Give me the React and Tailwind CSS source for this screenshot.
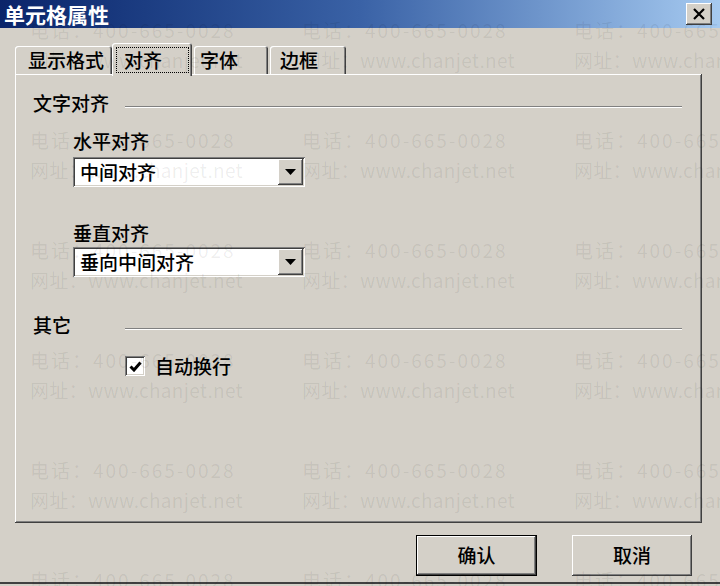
import React from "react";

const raised =
  "shadow-[inset_-1px_-1px_#404040,inset_1px_1px_#ffffff,inset_-2px_-2px_#808080,inset_2px_2px_#d4d0c8]";
const sunken =
  "shadow-[inset_1px_1px_#808080,inset_-1px_-1px_#ffffff,inset_2px_2px_#404040,inset_-2px_-2px_#d4d0c8]";

const Tab = ({ label, active, className }) => (
  <div
    className={`flex items-center rounded-t-[3px] bg-[#d4d0c8] shadow-[inset_1px_1px_#ffffff,inset_-1px_0_#404040,inset_-2px_0_#808080] ${className} ${
      active ? "relative z-10 -mb-[2px] h-[33px]" : "h-[28px]"
    }`}
  >
    {active ? (
      <span className="ml-[4px] mr-[3px] flex-1 border border-dotted border-black pl-[7px] leading-[24px]">
        {label}
      </span>
    ) : (
      <span className="leading-[24px]">{label}</span>
    )}
  </div>
);

const Heading = ({ children }) => (
  <div className="flex items-center h-[22px]">
    <span className="w-[92px] leading-[22px]">{children}</span>
    <div className="mt-[8px] h-[2px] flex-1 border-t border-[#808080] border-b border-b-white" />
  </div>
);

const Select = ({ value }) => (
  <div className={`flex h-[30px] w-[232px] items-center bg-white ${sunken}`}>
    <span className="flex-1 pl-[7px] leading-[22px]">{value}</span>
    <div
      className={`mr-[2px] flex h-[26px] w-[25px] items-center justify-center bg-[#d4d0c8] ${raised}`}
    >
      <svg width="11" height="6" viewBox="0 0 11 6">
        <path d="M0 0H11L5.5 6Z" fill="#000" />
      </svg>
    </div>
  </div>
);

export default function App() {
  const rows = [0, 1, 2, 3, 4, 5];
  const cols = [0, 1, 2];

  return (
    <div
      className="relative h-[586px] w-[720px] overflow-hidden bg-[#d4d0c8] text-[19px] font-medium text-black"
      style={{ fontFamily: '"Noto Sans CJK SC", "Noto Sans", sans-serif' }}
    >
      {/* title bar */}
      <div className="flex h-[28px] items-center justify-between bg-linear-to-r from-[#0a246a] via-[#3a62a6] to-[#a6caf0] pl-[4px] pr-[8px]">
        <span className="text-[21px] font-bold leading-none text-white">单元格属性</span>
        <div className={`flex h-[22px] w-[26px] items-center justify-center bg-[#d4d0c8] ${raised}`}>
          <svg width="14" height="12" viewBox="0 0 14 12">
            <path d="M2 1L12 11M12 1L2 11" stroke="#000" strokeWidth="2.2" />
          </svg>
        </div>
      </div>

      <div className="flex h-[556px] flex-col border-b-2 border-[#404040] px-[15px] pt-[15px]">
        {/* tabs */}
        <div className="flex h-[31px] items-end">
          <Tab label="显示格式" className="w-[97px] pl-[13px]" />
          <Tab label="对齐" active className="w-[80px]" />
          <Tab label="字体" className="ml-[2px] w-[74px] pl-[6px]" />
          <Tab label="边框" className="ml-[2px] w-[76px] pl-[10px]" />
        </div>

        {/* panel */}
        <div className={`h-[449px] w-[687px] bg-[#d4d0c8] pl-[18px] pr-[20px] pt-[18px] ${raised}`}>
          <Heading>文字对齐</Heading>

          <div className="ml-[40px]">
            <div className="mt-[16px] leading-[22px]">水平对齐</div>
            <div className="mt-[5px]">
              <Select value="中间对齐" />
            </div>
            <div className="mt-[35px] leading-[22px]">垂直对齐</div>
            <div className="mt-[3px]">
              <Select value="垂向中间对齐" />
            </div>
          </div>

          <div className="mt-[37px]">
            <Heading>其它</Heading>
          </div>

          <div className="ml-[92px] mt-[19px] flex h-[22px] items-center gap-[10px]">
            <div className={`flex h-[20px] w-[20px] items-center justify-center bg-white ${sunken}`}>
              <svg width="13" height="11" viewBox="0 0 13 11">
                <path d="M1.5 5.5L5 9L11.5 1.5" fill="none" stroke="#000" strokeWidth="3" />
              </svg>
            </div>
            <span className="leading-[22px]">自动换行</span>
          </div>
        </div>

        {/* buttons */}
        <div className="mt-[12px] flex justify-end gap-[35px] pr-[13px]">
          <button className="h-[41px] w-[121px] border border-black bg-[#d4d0c8] p-0">
            <div className={`flex h-full w-full items-center justify-center ${raised}`}>确认</div>
          </button>
          <button
            className={`flex h-[41px] w-[120px] items-center justify-center bg-[#d4d0c8] ${raised}`}
          >
            取消
          </button>
        </div>
      </div>

      {/* watermark */}
      <div className="pointer-events-none absolute inset-0 z-20 flex flex-col pl-[30px] pt-[15px] text-[19px] font-normal text-black/[0.07]">
        {rows.map((r) => (
          <div key={r} className="flex h-[110px] shrink-0">
            {cols.map((c) => (
              <div key={c} className="w-[272px] shrink-0 whitespace-nowrap leading-[30px]">
                <div className="tracking-[2px]">电话：400-665-0028</div>
                <div className="tracking-[0.3px]">网址：www.chanjet.net</div>
              </div>
            ))}
          </div>
        ))}
      </div>
    </div>
  );
}
